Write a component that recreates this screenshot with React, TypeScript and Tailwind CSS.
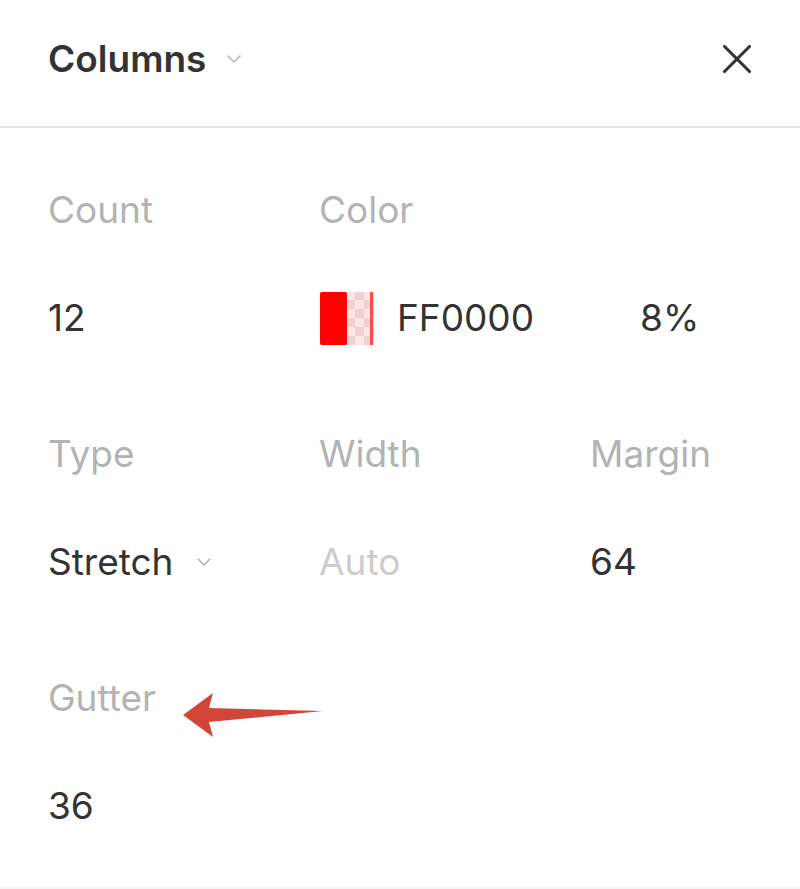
import { X, ChevronDown } from "lucide-react";

function Swatch() {
  return (
    <svg width="56" height="55" viewBox="0 0 56 55" className="shrink-0">
      <defs>
        <pattern id="chk" width="18" height="18" patternUnits="userSpaceOnUse">
          <rect width="18" height="18" fill="#fde6e6" />
          <rect width="9" height="9" fill="#f0d0d0" />
          <rect x="9" y="9" width="9" height="9" fill="#f0d0d0" />
        </pattern>
      </defs>
      <rect x="1" y="1" width="54" height="53" rx="2" fill="url(#chk)" />
      <rect x="1" y="1" width="27" height="53" rx="2" fill="#ff0000" />
      <rect x="51" y="1" width="3" height="53" fill="#ff3030" opacity="0.85" />
    </svg>
  );
}

function Arrow() {
  return (
    <svg width="145" height="50" viewBox="0 0 145 50" className="mt-[40px] shrink-0">
      <path
        d="M0 22 L30 0 L26 15 L140 18 L26 29 L30 44 Z"
        fill="#d2463a"
        strokeLinejoin="round"
      />
    </svg>
  );
}

function Field({
  label,
  children,
  extra,
}: {
  label: string;
  children: React.ReactNode;
  extra?: React.ReactNode;
}) {
  return (
    <div className="flex flex-col">
      <div className="flex h-[60px] items-center gap-[27px] text-[37px] text-[#b3b3b3]">
        <span>{label}</span>
        {extra}
      </div>
      <div className="mt-[48px] flex h-[60px] items-center text-[37px] text-[#333333]">
        {children}
      </div>
    </div>
  );
}

export default function App() {
  return (
    <div
      className="flex h-[889px] w-[800px] flex-col border-b-2 border-[#f4f4f4] bg-white"
      style={{ fontFamily: "Inter, 'Noto Sans', sans-serif" }}
    >
      <div className="flex h-[128px] shrink-0 items-center justify-between border-b-2 border-[#e6e6e6] pb-[8px] pl-[48px] pr-[38px]">
        <div className="flex items-center gap-4">
          <span className="text-[37px] font-semibold text-[#333333]">Columns</span>
          <ChevronDown className="h-6 w-6 text-[#b3b3b3]" strokeWidth={1.5} />
        </div>
        <X className="h-[50px] w-[50px] text-[#333333]" strokeWidth={1.5} />
      </div>

      <div className="flex flex-col gap-[76px] pl-[48px] pt-[52px]">
        <div className="grid grid-cols-[271px_271px_1fr]">
          <Field label="Count">12</Field>
          <div className="col-span-2">
            <Field label="Color">
              <Swatch />
              <span className="ml-[22px]">FF0000</span>
              <span className="ml-[106px]">8%</span>
            </Field>
          </div>
        </div>

        <div className="grid grid-cols-[271px_271px_1fr]">
          <Field label="Type">
            <span>Stretch</span>
            <ChevronDown className="ml-[18px] h-6 w-6 text-[#b3b3b3]" strokeWidth={1.5} />
          </Field>
          <Field label="Width">
            <span className="text-[#cccccc]">Auto</span>
          </Field>
          <Field label="Margin">64</Field>
        </div>

        <div className="grid grid-cols-[271px_271px_1fr]">
          <Field label="Gutter" extra={<Arrow />}>
            36
          </Field>
        </div>
      </div>
    </div>
  );
}
